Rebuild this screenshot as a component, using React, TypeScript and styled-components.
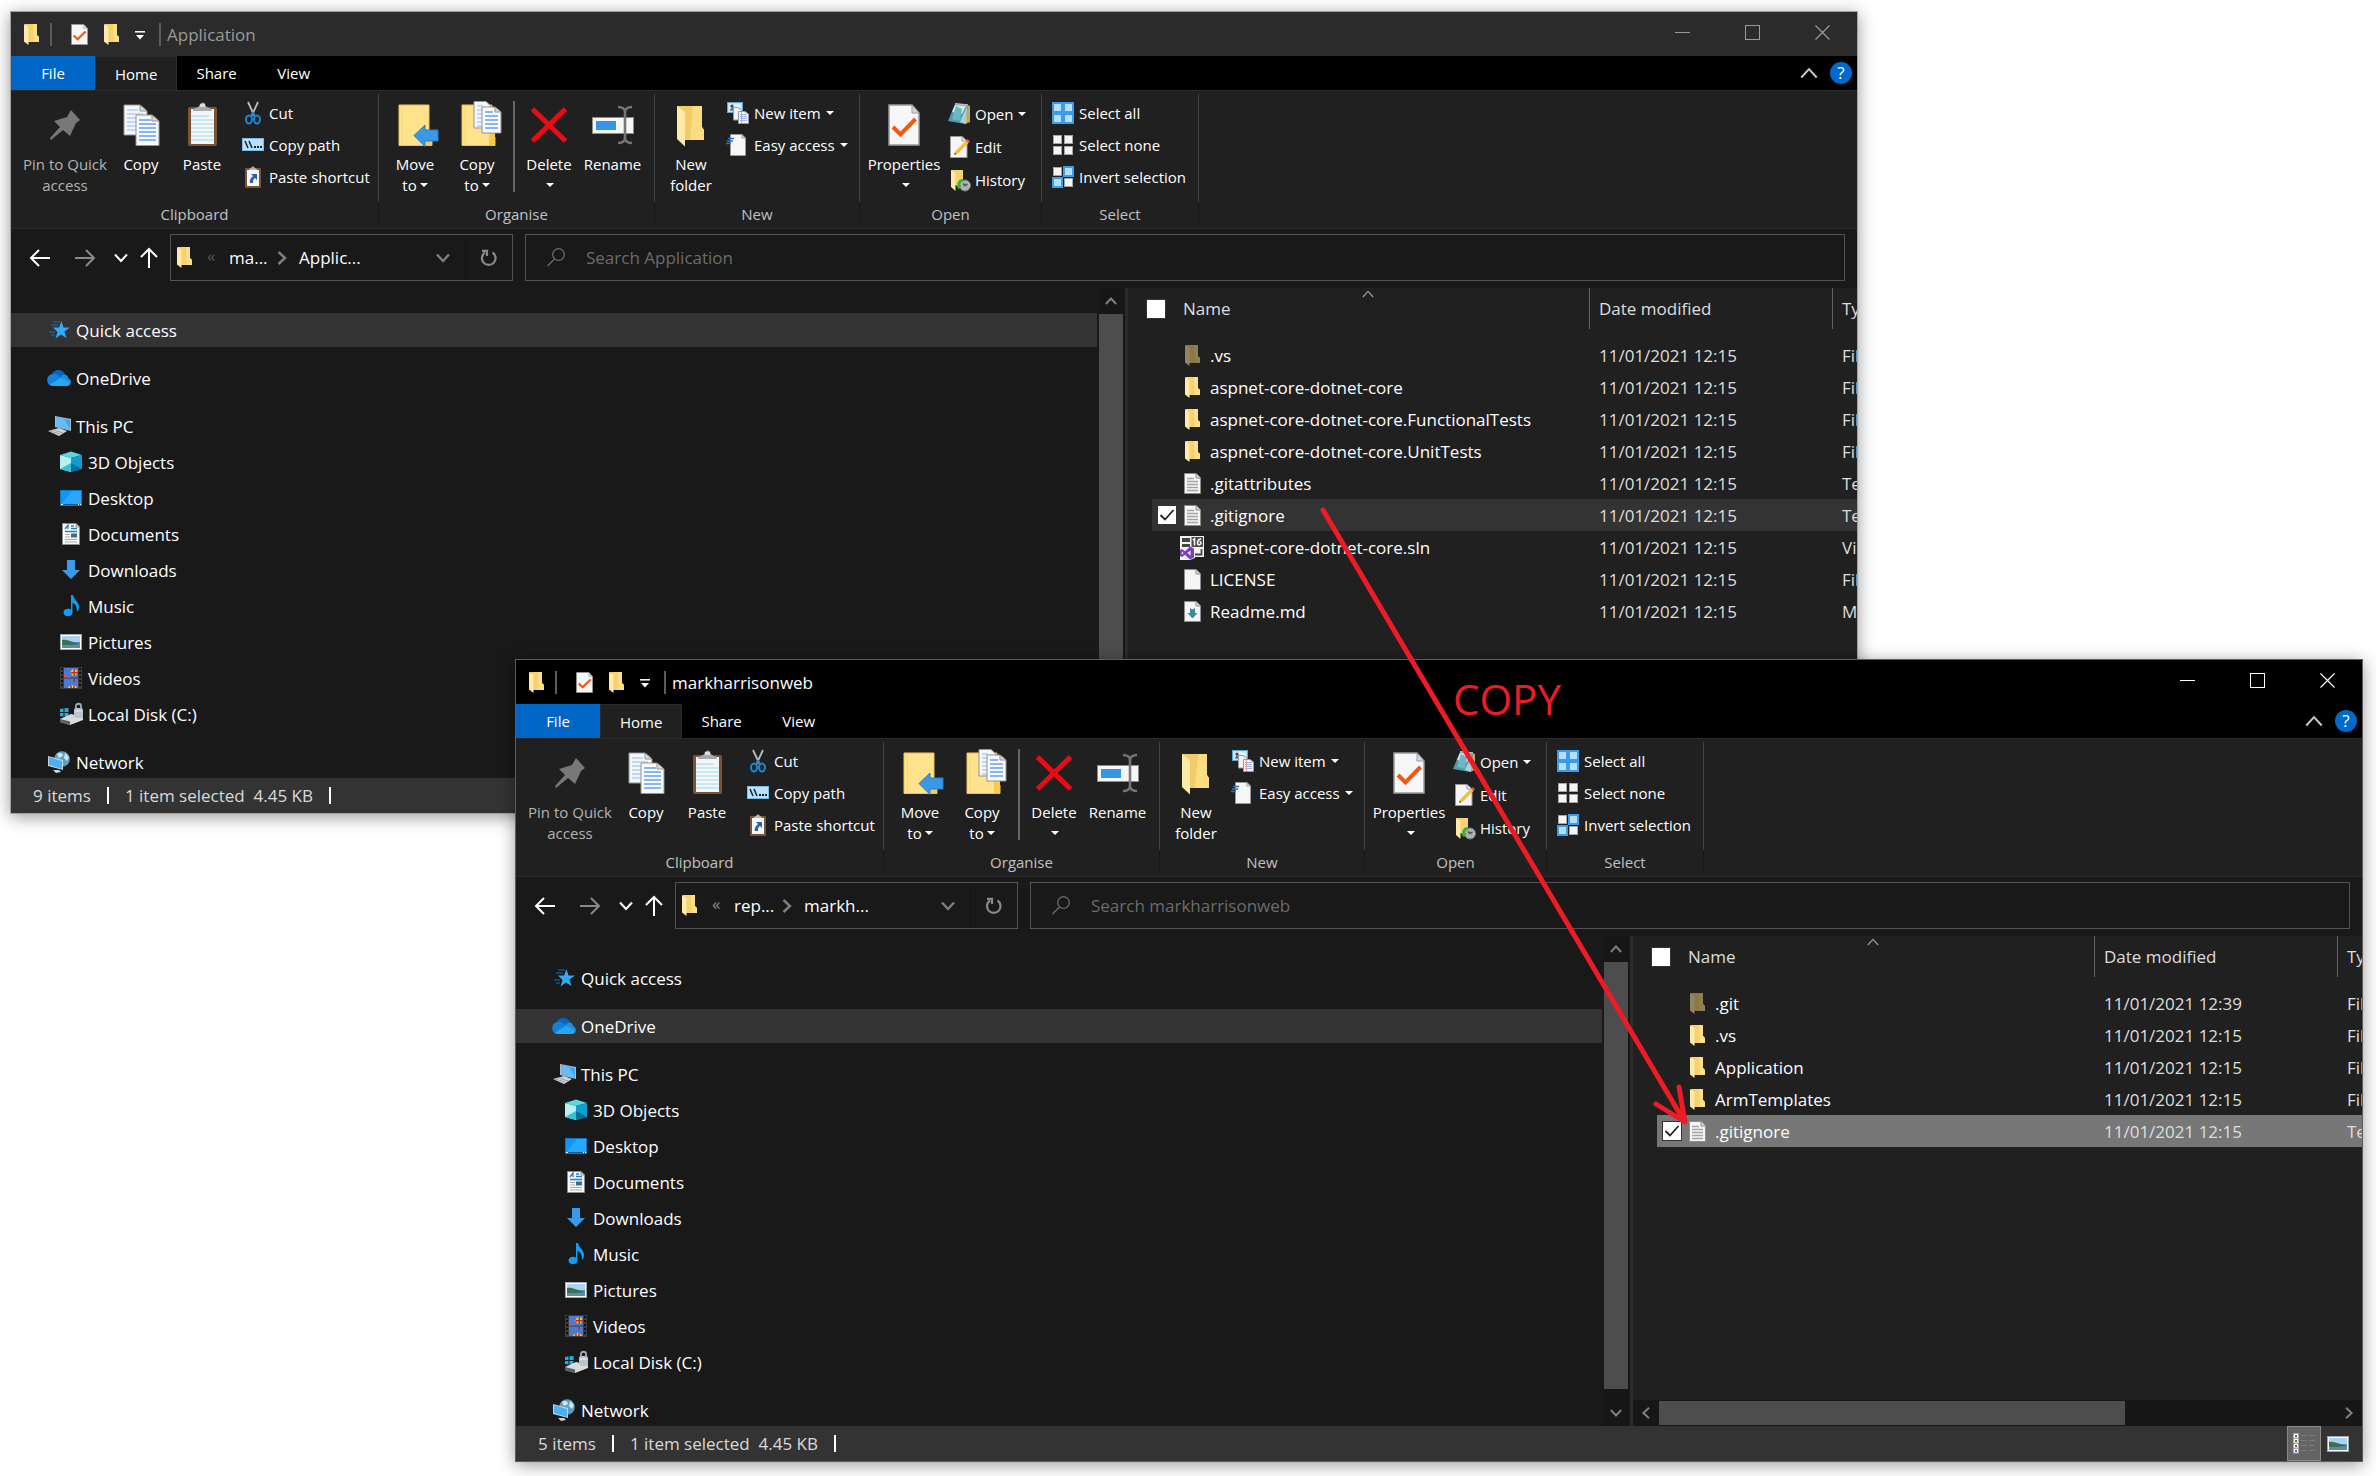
import React from 'react';
import styled, { createGlobalStyle, css } from 'styled-components';

const GlobalStyle = createGlobalStyle`
  *, *::before, *::after { box-sizing: border-box; }
  body { margin: 0; background: #fff; }
  body, button, input, table { font-family: 'Open Sans', 'Noto Sans', sans-serif; font-size: 17px; }
  button {
    margin: 0; padding: 0; border: 0; background: none; color: inherit;
    cursor: pointer; text-align: left; white-space: nowrap;
  }
  ul { margin: 0; padding: 0; list-style: none; }
  svg { display: block; flex: none; overflow: visible; }
`;

/* ---------- drawings ---------- */

const SmallFolder = ({ dim = false, w = 15 }: { dim?: boolean; w?: number }) => (
  <svg width={w} height={21} viewBox="0 0 15 21" preserveAspectRatio="none" opacity={dim ? 0.5 : 1}>
    <path d="M1 0H13V11L15 13V18H3Z" fill="#f7d272" />
    <path d="M9 0H13V11L15 13V18H10Z" fill="#fddf85" />
    <path d="M0 0L4.500 3V21L0 17.500Z" fill="#ffeaa8" />
  </svg>
);

const Sheet = ({ kind = 'blank' }: { kind?: 'blank' | 'text' | 'md' }) => (
  <svg width={17} height={21} viewBox="0 0 17 21">
    <path d="M.5.5H12L16.500 5V20.500H.5Z" fill="#f4f5f6" stroke="#8c8c8c" />
    <path d="M12 .5V5H16.500" fill="#dcdcdc" stroke="#8c8c8c" />
    {kind === 'text' && (
      <path d="M3 5.500H10M3 8.500H14M3 11.500H14M3 14.500H14M3 17.500H14" stroke="#a4a4a4" strokeWidth="1.300" />
    )}
    {kind === 'md' && <path d="M6 7L8.500 8.500L11 7V12H13.500L8.500 17.500L3.500 12H6Z" fill="#3f87a6" />}
  </svg>
);

const SolutionIcon = () => (
  <svg width={24} height={23} viewBox="0 0 24 23">
    <rect width={24} height={21} fill="#f3f3f3" />
    <path d="M2 2H10V6H2ZM2 7H10V11H2Z" fill="#454545" />
    <path d="M2 7.500H10" stroke="#f3f3f3" />
    <rect x={11.500} y={1} width={11.500} height={10} fill="#4c4c4c" />
    <path d="M12.800 4L14.500 2.800V9.500M21 2.800C18 3.500 17.500 5 17.500 7.500A1.800 1.600 0 1 0 19.500 5.500" stroke="#fff" strokeWidth="1.500" fill="none" />
    <path d="M21.500 13V18.500H15" stroke="#454545" strokeWidth="1.800" fill="none" />
    <path d="M-.5 11H10L15 13V22L10 24H0Z" fill="#f3f3f3" />
    <path d="M10 10.500L14 12.500V21.500L10 23.500L5 18.800L2 21L0 20V14L2 13L5 15.200ZM10.500 14.500L7.200 17L10.500 19.500ZM1.800 15.200V18.800L3.500 17Z" fill="#7b3fc4" fillRule="evenodd" />
  </svg>
);

const CheckSheet = ({ w = 18, h = 21 }: { w?: number; h?: number }) => (
  <svg width={w} height={h} viewBox="0 0 32 42" preserveAspectRatio="none">
    <path d="M1 1H24L31 9V41H1Z" fill="#f6f7f8" stroke="#9a9a9a" strokeWidth="1.500" />
    <path d="M24 1V9H31Z" fill="#d7d9db" stroke="#9a9a9a" />
    <path d="M5 23L12.500 30.500L27.500 15" fill="none" stroke="#f0590f" strokeWidth="4" />
  </svg>
);

const QuickMenuIcon = () => (
  <svg width={10} height={12} viewBox="0 0 10 12">
    <path d="M0 3.800H10" stroke="#fff" strokeWidth="1.500" />
    <path d="M1 7H9L5 11.500Z" fill="#fff" />
  </svg>
);

const MinimiseIcon = () => <svg width={15} height={15}><path d="M0 7.500H15" stroke="currentColor" /></svg>;
const MaximiseIcon = () => <svg width={15} height={15}><rect x=".5" y=".5" width={14} height={14} fill="none" stroke="currentColor" /></svg>;
const CloseIcon = () => <svg width={15} height={15}><path d="M.5.5L14.500 14.500M14.500.5L.5 14.500" stroke="currentColor" strokeWidth="1.200" /></svg>;

const Caret = styled.span`
  display: inline-block;
  border: 4px solid transparent;
  border-top-color: currentColor;
  border-bottom: 0;
  vertical-align: 4px;
  margin-left: 5px;
`;

type ChevronProps = { dir: 'up' | 'down' | 'left' | 'right'; size?: number; color?: string; weight?: number };
const turns = { up: 0, right: 90, down: 180, left: 270 };
const Chevron = ({ dir, size = 14, color = '#7e7e7e', weight = 2 }: ChevronProps) => (
  <svg width={size} height={size} viewBox="0 0 14 14">
    <path d="M1 10.500L7 4L13 10.500" fill="none" stroke={color} strokeWidth={weight} transform={`rotate(${turns[dir]} 7 7)`} />
  </svg>
);

const HelpBadge = styled.button`
  width: 22px;
  height: 22px;
  border-radius: 50%;
  background: #0069cc;
  color: #fff;
  font-size: 17px;
  line-height: 22px;
  text-align: center;
`;

/* Large ribbon drawings share a 44 x 46 field. */
const Big = ({ children }: { children: React.ReactNode }) => (
  <svg width={44} height={46} viewBox="0 0 44 46">{children}</svg>
);

const pageLines = (x: number, y: number, w: number, n: number, color: string, step = 4) =>
  Array.from({ length: n }, (_, i) => (
    <path key={i} d={`M${x} ${y + i * step}H${x + (i === 0 ? w - 5 : w)}`} stroke={color} strokeWidth="1.300" />
  ));

const PinIcon = () => (
  <Big>
    <path d="M28 9L37 19L33 22L27 35L20 29L8 39L7 37L17 26L11 20L24 16Z" fill="#787878" />
  </Big>
);
const CopyIcon = () => (
  <Big>
    <path d="M5 4H21L28 10V34H5Z" fill="#f4f6fa" stroke="#939393" />
    <path d="M21 4V10H28Z" fill="#ddd" stroke="#939393" />
    {pageLines(8, 9, 16, 6, '#a9c8f5')}
    <path d="M17 14H33L40 20V44.500H17Z" fill="#f8f9fb" stroke="#939393" />
    <path d="M33 14V20H40Z" fill="#ddd" stroke="#939393" />
    {pageLines(20, 19, 17, 6, '#4a93ee')}
  </Big>
);
const PasteIcon = () => (
  <Big>
    <rect x={8} y={6} width={29} height={39} rx={2} fill="#7b5336" />
    <path d="M11 8H34V43H11Z" fill="#f4f7f9" />
    {pageLines(11, 15, 23, 7, '#b5dcec')}
    <path d="M13 10C13 6 19 8 20 3C22 1 24 1 25 3C26 8 32 6 32 10Z" fill="#a9a9a9" />
    <rect x={20} y={3} width={5} height={3} fill="#ddd" />
  </Big>
);
const folderBody = (x: number) => (
  <>
    <path d={`M${x} 4H${x + 30}V36H${x + 33}V44.500H${x}Z`} fill="#ffe28c" stroke="#f0c44a" />
    <path d={`M${x + 3} 4V44`} stroke="#f7d77a" />
    <path d={`M${x + 27} 44V31C${x + 27} 28 ${x + 33} 28 ${x + 33} 32V44Z`} fill="#f6c94f" />
  </>
);
const MoveIcon = () => (
  <Big>
    {folderBody(6)}
    <path d="M21 34.500L32 24V29H45V40H32V45.500Z" fill="#3b98e6" stroke="#2a7cc4" />
  </Big>
);
const CopyToIcon = () => (
  <Big>
    {folderBody(7)}
    <path d="M19 .5H31L36 5V27H19Z" fill="#f4f6fa" stroke="#939393" />
    {pageLines(22, 5, 11, 6, '#a9c8f5')}
    <path d="M27 6H40L46 11V32H27Z" fill="#f8f9fb" stroke="#939393" />
    <path d="M40 6V11H46Z" fill="#ddd" stroke="#939393" />
    {pageLines(30, 11, 13, 5, '#4a93ee')}
  </Big>
);
const DeleteIcon = () => (
  <Big>
    <path d="M5.500 8L38.500 40M38.500 8L5.500 40" stroke="#ee0a14" strokeWidth="5" />
  </Big>
);
const RenameIcon = () => (
  <Big>
    <rect x="1.500" y="16.500" width={41} height={16} fill="#f5f6f7" stroke="#8c8c8c" />
    <rect x={5} y={20} width={20} height={9} fill="#3596e8" />
    <path d="M27 6C31 6 34 8 34 11V37C34 40 31 42 27 42M41 6C37 6 34 8 34 11V37C34 40 37 42 41 42" fill="none" stroke="#757575" strokeWidth="2.600" />
  </Big>
);
const NewFolderIcon = () => (
  <Big>
    <path d="M8 5H33V26L35 29V39H15Z" fill="#f1cc69" />
    <path d="M24 5H33V26L35 29V39H21Z" fill="#fbdc82" />
    <path d="M8 5L16 11V45.500L8 38Z" fill="#ffeaa8" />
  </Big>
);
const PropertiesIcon = () => (
  <Big>
    <svg x={6} y={3}><CheckSheet w={32} h={42} /></svg>
  </Big>
);

/* Small ribbon drawings share a 22 x 22 field. */
const Small = ({ children }: { children: React.ReactNode }) => (
  <svg width={22} height={22} viewBox="0 0 22 22">{children}</svg>
);
const CutIcon = () => (
  <Small>
    <path d="M6 0L12.500 14M16 0L9.500 14" stroke="#b9bdc2" strokeWidth="1.800" />
    <ellipse cx={7} cy={17.500} rx={3} ry={4} fill="none" stroke="#1c86cf" strokeWidth="2" />
    <ellipse cx={15} cy={17.500} rx={3} ry={4} fill="none" stroke="#1c86cf" strokeWidth="2" />
    <path d="M9 14L11 11L13 14" fill="none" stroke="#1c86cf" strokeWidth="2" />
  </Small>
);
const CopyPathIcon = () => (
  <Small>
    <rect x=".5" y="4.500" width={21} height={12} fill="#b9e1fb" stroke="#7cbbe4" />
    <path d="M3 7L6 14M7 7L10 14" stroke="#123" strokeWidth="1.500" />
    <path d="M12 13H14M15 13H17M18 13H20" stroke="#123" strokeWidth="2" />
  </Small>
);
const ShortcutIcon = () => (
  <Small>
    <rect x={3} y={2} width={16} height={20} rx={1} fill="#7b5336" />
    <rect x={5} y={4} width={12} height={16} fill="#f6f7f9" />
    <path d="M7 4C7 2 10 2 11 0C12 2 15 2 15 4Z" fill="#b5b5b5" />
    <path d="M9 8H15V14L13 12C11 13 11 15 11 17L8 17C7 14 9 12 11 10Z" fill="#2f5fae" />
  </Small>
);
const NewItemIcon = () => (
  <Small>
    <rect x=".5" y=".5" width={15} height={10} fill="#bfe2f5" stroke="#5fa6cf" />
    <rect x={2.500} y={2.500} width={11} height={6} fill="#e8f4fa" />
    <path d="M3 8.500C3 5 7 5 7 8.500Z" fill="#37628a" />
    <circle cx={5} cy={4.200} r={1.600} fill="#5a4534" />
    <path d="M6.500 5.500H11L14.500 8V18H6.500Z" fill="#f2f2f2" stroke="#999" />
    <path d="M11.500 9.500H18L21.500 12V21.500H11.500Z" fill="#f6f6f6" stroke="#999" />
    <path d="M13 12.500H20M13 14.500H20M13 16.500H20M13 18.500H20" stroke="#9db7e0" />
    <path d="M14.500 10V21" stroke="#e69a9a" />
  </Small>
);
const EasyAccessIcon = () => (
  <Small>
    <path d="M3.500.5H15L18.500 4V21.500H3.500Z" fill="#f4f6f8" stroke="#999" />
    <path d="M15 .5V4H18.500" fill="none" stroke="#999" />
    <path d="M1 4.500H7M0 7H6M-1 9.500H4" stroke="#2a74c0" strokeWidth="1.400" />
  </Small>
);
const OpenIcon = () => (
  <Small>
    <path d="M19 2L22 3V19L17 21Z" fill="#c9a65a" />
    <path d="M7 1L20 2L17 21L0 18Z" fill="#4f9aac" />
    <path d="M7 2L18 3L14 11L4 9Z" fill="#cfe9ee" />
    <path d="M8 3L4 16L12 18L14 6Z" fill="#6fb5c3" />
    <path d="M19 3L18 21L12 19Z" fill="#a9d3dc" />
    <path d="M7 .8L20 2" stroke="#b9c3c6" strokeWidth="1.400" />
  </Small>
);
const EditIcon = () => (
  <Small>
    <path d="M2.500.5H14L19 5V21.500H2.500Z" fill="#f6f6f6" stroke="#999" />
    <path d="M14 .5V5H19" fill="none" stroke="#999" />
    <path d="M6 19L7.500 15L18 4.500L20.500 7L10 17.500Z" fill="#f4bf3c" />
    <path d="M18 4.500L19.500 3L22 5.500L20.500 7Z" fill="#e0566a" />
    <path d="M6 19L7 16.500L8.500 18Z" fill="#4a4a4a" />
  </Small>
);
const HistoryIcon = () => (
  <Small>
    <path d="M3 1H15V16H5Z" fill="#f7d272" />
    <path d="M3 1L7.500 4V22L3 18Z" fill="#ffeaa8" />
    <circle cx={17} cy={16.500} r="5.500" fill="#a5aaad" stroke="#74797c" />
    <circle cx={17} cy={16.500} r="3.800" fill="none" stroke="#d9dcde" strokeDasharray="1 1.500" />
    <path d="M15 14.500L17 16.500L19.500 15" fill="none" stroke="#444" strokeWidth="1.200" />
    <path d="M15 10C11 10 9 13 9.500 16L7.500 16L11 20.500L13.500 16H11.500C11.500 14 13 12.500 15 12.500Z" fill="#2fb52f" />
  </Small>
);
const Tiles = ({ on }: { on: boolean[] }) => (
  <Small>
    {on.map((active, i) => {
      const x = (i % 2) * 11;
      const y = i < 2 ? 0 : 11;
      return active ? (
        <rect key={i} x={x + 1} y={y + 1} width={9} height={9} fill="#b5e0fc" stroke="#3c9bea" strokeWidth="2" />
      ) : (
        <rect key={i} x={x + 1.5} y={y + 1.5} width={8} height={8} fill="#f5f5f5" stroke="#a5a5a5" />
      );
    })}
  </Small>
);

/* Navigation drawings share a 24 x 24 field. */
const Nav24 = ({ children }: { children: React.ReactNode }) => (
  <svg width={24} height={24} viewBox="0 0 24 24">{children}</svg>
);
const navIcons: Record<string, React.ReactNode> = {
  star: (
    <Nav24>
      <path d="M14.500 3L16.500 9.500H23L17.500 13.500L19.500 20L14 16.500L8.500 20.500L10.500 14L6 9.500H12Z" fill="#35a8f5" />
      <path d="M6 4H13M4 7H11M2 14H8M4 17H8" stroke="#1f6ea8" />
    </Nav24>
  ),
  cloud: (
    <Nav24>
      <path d="M5 9C6 3 15 2 18 8L12 14L3 12Z" fill="#0a63bd" />
      <path d="M5 8C8 7 11 9 14 11L6 20C-1 20-2 10 5 8Z" fill="#1480dc" />
      <path d="M14 11C16 7 21 8 21 12C25 13 25 20 20 20H14Z" fill="#1b90e6" />
      <path d="M3 18.500L14 11.500L23 17C22 19 21 20 19.500 20H6C5 20 4 19.500 3 18.500Z" fill="#2aa6ee" />
    </Nav24>
  ),
  pc: (
    <Nav24>
      <path d="M8 2L24 5V17L8 13Z" fill="#b3bac0" />
      <path d="M9 3L23 6V16L9 12Z" fill="#3da6f2" />
      <path d="M9 3L17 5L23 15L23 16L9 12Z" fill="#63bdf8" />
      <path d="M1 17L12 14L20 17L12 22Z" fill="#cfd4d9" />
      <path d="M3 17L13 20M7 16L16 19" stroke="#8a9299" strokeWidth=".8" />
    </Nav24>
  ),
  cube: (
    <Nav24>
      <path d="M1 5L12 1.500L23 5L12 8Z" fill="#5cd6e0" />
      <path d="M1 5L12 8V22L1 19Z" fill="#b5f0f3" />
      <path d="M23 5L12 8V22L23 19Z" fill="#0e9ed0" />
      <path d="M1 19L12 13V22Z" fill="#35c2d4" />
      <path d="M23 19L12 13V22Z" fill="#076f9c" />
    </Nav24>
  ),
  desktop: (
    <Nav24>
      <rect x={1.500} y={4.500} width={21} height={15} fill="#0f97f5" stroke="#0a78c6" />
      <path d="M2 19L13 5H22V19Z" fill="#2aa8ff" />
      <path d="M3 18.500H21" stroke="#0860a0" />
      <path d="M2 18.500H4M19 18.500H20M21 18.500H22" stroke="#fff" />
    </Nav24>
  ),
  document: (
    <Nav24>
      <path d="M3.500 1.500H17L20.500 5V22.500H3.500Z" fill="#fafafa" stroke="#8c8c8c" />
      <path d="M17 1.500V5H20.500" fill="none" stroke="#8c8c8c" />
      <path d="M6 7L9 3V7M12 4H15M12 6.500H18M6 9.500H18" fill="none" stroke="#1d80c9" strokeWidth="1.300" />
      <path d="M6 12.500H11M6 15H11M6 17.500H18M6 20H18" stroke="#aaa" />
      <rect x={12} y={11.500} width={6} height={4} fill="#3a6c8c" />
    </Nav24>
  ),
  download: (
    <Nav24>
      <path d="M8 2H16V12H21L12 21L3 12H8Z" fill="#3b98ea" />
    </Nav24>
  ),
  music: (
    <Nav24>
      <ellipse cx={9} cy={18.500} rx={4.500} ry={3.800} fill="#119cf5" />
      <path d="M12 1H14C15 6 20 8 20 13C20 15 19 17 18 18C18 13 17 10 13.500 9V18H12Z" fill="#119cf5" />
    </Nav24>
  ),
  picture: (
    <Nav24>
      <rect x={1.500} y={4.500} width={21} height={15} fill="#fff" stroke="#a5a5a5" />
      <rect x={3} y={6} width={18} height={6} fill="#a9d3f5" />
      <rect x={3} y={12} width={18} height={6} fill="#5d8cab" />
      <path d="M3 10C8 9 12 12 21 14C16 15 8 15 3 15Z" fill="#3f6f52" />
    </Nav24>
  ),
  video: (
    <Nav24>
      <rect x={1} y={1} width={22} height={22} fill="#3c3c3c" />
      <rect x={5} y={2} width={14} height={9.500} fill="#4a7bd0" />
      <rect x={5} y={12.500} width={14} height={9.500} fill="#4a7bd0" />
      <path d="M5 8L11 11.500H5Z" fill="#d44a6c" />
      <path d="M15 3C18 3 19 6 18 8L16 10H14L12 8C11 5 13 3 15 3Z" fill="#f4c51e" />
      <path d="M14.500 3H16V10H14.500ZM12 6H19V7.500H12Z" fill="#cc2a1e" />
      <path d="M9 22C10 18 17 18 18 22Z" fill="#f4c51e" />
      <path d="M12 22V19.500M15 22V19.500M15 13V16" stroke="#cc2a1e" strokeWidth="1.600" />
      <path d="M3 2V22M21 2V22" stroke="#111" strokeWidth="2" strokeDasharray="2 2" />
    </Nav24>
  ),
  disk: (
    <Nav24>
      <path d="M1 7L4.500 6.500V10H1ZM5.500 6.300L9.500 6V10H5.500ZM1 11H4.500V14.500L1 14ZM5.500 11H9.500V15L5.500 14.500Z" fill="#14b4e8" />
      <path d="M1 17L12 12L24 15V18L11 23L1 20Z" fill="#d8dadc" />
      <path d="M1 17L11 19.500V23L1 20Z" fill="#5a5f62" />
      <rect x={15} y={6} width={9} height={10} rx={2} fill="#bcc5cb" />
      <path d="M17 7V4C17 1 22 1 22 4V7" fill="none" stroke="#a5adb2" strokeWidth="1.800" />
      <path d="M16 9H23" stroke="#eef" />
    </Nav24>
  ),
  network: (
    <Nav24>
      <circle cx={15} cy={9} r={7.800} fill="#5e9fbe" />
      <path d="M10 4C13 2 16 3 16 6L12 8ZM18 3L22 7L20 11L17 8Z" fill="#cfe7f0" />
      <path d="M1 6L16 10V20L1 16Z" fill="#c9d3da" />
      <path d="M2 7L15 11V19L2 15Z" fill="#4db0f5" />
      <path d="M6 20L12 20L14 22L9 23Z" fill="#cfd4d9" />
    </Nav24>
  ),
};

/* ---------- window frame ---------- */

const Desktop = styled.main`
  position: relative;
  min-height: 100vh;
  overflow: hidden;
  background: #fff;
`;

const Frame = styled.section<{ $front?: boolean }>`
  position: absolute;
  top: ${(p) => (p.$front ? 659 : 11)}px;
  left: ${(p) => (p.$front ? 515 : 10)}px;
  width: calc(100% - 528px);
  min-width: 1300px;
  height: calc(100vh - 673px);
  min-height: 640px;
  display: flex;
  flex-direction: column;
  border: 1px solid ${(p) => (p.$front ? '#5c5c5c' : '#a2a2a2')};
  background: #191919;
  color: #fff;
  box-shadow: 0 3px 16px rgba(0, 0, 0, 0.4);
`;

const TitleBar = styled.header<{ $front?: boolean }>`
  flex: none;
  display: flex;
  align-items: center;
  height: 44px;
  padding-left: 13px;
  background: ${(p) => (p.$front ? '#000' : '#2b2b2b')};
  color: ${(p) => (p.$front ? '#fff' : '#9a9a9a')};
`;
const TitleRule = styled.span`
  width: 2px;
  height: 23px;
  background: #5c5c5c;
`;
const QuickTools = styled.div`
  display: flex;
  align-items: center;
  gap: 16px;
  padding: 0 14px 0 19px;
`;
const TitleLead = styled.div`
  display: flex;
  align-items: center;
  gap: 11px;
`;
const Title = styled.h1`
  margin: 0;
  padding-left: 6px;
  flex: 1;
  font-size: 17px;
  font-weight: 400;
`;
const CaptionButton = styled.button`
  width: 70px;
  height: 44px;
  padding-bottom: 3px;
  display: grid;
  place-items: center;
`;

const TabBar = styled.div`
  flex: none;
  display: flex;
  align-items: center;
  height: 34px;
  background: #000;
`;
const Tab = styled.button<{ $kind?: 'file' | 'active' }>`
  height: 34px;
  min-width: ${(p) => (p.$kind === 'file' ? 84 : 76)}px;
  padding: 0 19px;
  font-size: 15px;
  text-align: center;
  ${(p) => p.$kind === 'file' && css`background: #0066c5;`}
  ${(p) => p.$kind === 'active' && css`
    background: #202020;
    border: 1px solid #2b2b2b;
    border-bottom: 0;
  `}
`;
const TabTools = styled.div`
  display: flex;
  align-items: center;
  gap: 12px;
  margin-left: auto;
  padding-right: 5px;
`;

/* ---------- ribbon ---------- */

const RibbonBar = styled.div`
  flex: none;
  display: flex;
  height: 139px;
  padding: 3px 0;
  background: #202020;
  border: solid #2b2b2b;
  border-width: 1px 0;
`;
const Group = styled.section<{ $w: number }>`
  flex: none;
  width: ${(p) => p.$w}px;
  display: flex;
  flex-direction: column;
  font-size: 15px;
`;
const GroupBody = styled.div<{ $pad: number }>`
  display: flex;
  height: 108px;
  padding-left: ${(p) => p.$pad}px;
  border-right: 1px solid #424242;
`;
const GroupName = styled.h2`
  margin: 0;
  height: 23px;
  border-right: 1px solid #181818;
  color: #c0c0c0;
  font-size: 15px;
  font-weight: 400;
  line-height: 25px;
  text-align: center;
`;
const BigButton = styled.button<{ $w: number; $muted?: boolean }>`
  width: ${(p) => p.$w}px;
  padding-top: 7px;
  display: flex;
  flex-direction: column;
  align-items: center;
  font-size: 15px;
  line-height: 21px;
  color: ${(p) => (p.$muted ? '#b4b4b4' : '#fff')};
`;
const BigLabel = styled.span`
  margin-top: 7px;
  text-align: center;
  ${Caret} { margin-left: 3px; }
`;
const SmallList = styled.div`
  padding: 3px 0 0 4px;
  display: flex;
  flex-direction: column;
`;
const SmallButton = styled.button<{ $h: number }>`
  height: ${(p) => p.$h}px;
  display: flex;
  align-items: center;
  gap: 5px;
  font-size: 15px;
`;
const RibbonRule = styled.span`
  width: 2px;
  height: 91px;
  margin: 7px 3px 0 5px;
  background: #666;
`;

type SmallItem = { icon: React.ReactNode; label: string; menu?: boolean };
const SmallItems = ({ items, h = 32 }: { items: SmallItem[]; h?: number }) => (
  <SmallList>
    {items.map((it) => (
      <SmallButton key={it.label} type="button" $h={h}>
        {it.icon}
        <span>{it.label}{it.menu && <Caret />}</span>
      </SmallButton>
    ))}
  </SmallList>
);

type BigItemProps = { icon: React.ReactNode; lines: string[]; w: number; menu?: boolean; muted?: boolean };
const BigItem = ({ icon, lines, w, menu, muted }: BigItemProps) => (
  <BigButton type="button" $w={w} $muted={muted}>
    {icon}
    <BigLabel>
      {lines.map((line, i) => (
        <React.Fragment key={i}>
          {i > 0 && <br />}
          {line}
          {menu && i === lines.length - 1 && <Caret />}
        </React.Fragment>
      ))}
    </BigLabel>
  </BigButton>
);

const Ribbon = () => (
  <RibbonBar>
    <Group $w={368}>
      <GroupBody $pad={3}>
        <BigItem icon={<PinIcon />} lines={['Pin to Quick', 'access']} w={102} muted />
        <BigItem icon={<CopyIcon />} lines={['Copy']} w={50} />
        <BigItem icon={<PasteIcon />} lines={['Paste']} w={72} />
        <SmallItems
          items={[
            { icon: <CutIcon />, label: 'Cut' },
            { icon: <CopyPathIcon />, label: 'Copy path' },
            { icon: <ShortcutIcon />, label: 'Paste shortcut' },
          ]}
        />
      </GroupBody>
      <GroupName>Clipboard</GroupName>
    </Group>
    <Group $w={276}>
      <GroupBody $pad={5}>
        <BigItem icon={<MoveIcon />} lines={['Move', 'to']} w={62} menu />
        <BigItem icon={<CopyToIcon />} lines={['Copy', 'to']} w={62} menu />
        <RibbonRule />
        <BigItem icon={<DeleteIcon />} lines={['Delete', '']} w={62} menu />
        <BigItem icon={<RenameIcon />} lines={['Rename']} w={65} />
      </GroupBody>
      <GroupName>Organise</GroupName>
    </Group>
    <Group $w={205}>
      <GroupBody $pad={4}>
        <BigItem icon={<NewFolderIcon />} lines={['New', 'folder']} w={64} />
        <SmallItems
          items={[
            { icon: <NewItemIcon />, label: 'New item', menu: true },
            { icon: <EasyAccessIcon />, label: 'Easy access', menu: true },
          ]}
        />
      </GroupBody>
      <GroupName>New</GroupName>
    </Group>
    <Group $w={182}>
      <GroupBody $pad={4}>
        <BigItem icon={<PropertiesIcon />} lines={['Properties', '']} w={80} menu />
        <SmallItems
          h={33}
          items={[
            { icon: <OpenIcon />, label: 'Open', menu: true },
            { icon: <EditIcon />, label: 'Edit' },
            { icon: <HistoryIcon />, label: 'History' },
          ]}
        />
      </GroupBody>
      <GroupName>Open</GroupName>
    </Group>
    <Group $w={157}>
      <GroupBody $pad={6}>
        <SmallItems
          items={[
            { icon: <Tiles on={[true, true, true, true]} />, label: 'Select all' },
            { icon: <Tiles on={[false, false, false, false]} />, label: 'Select none' },
            { icon: <Tiles on={[false, true, true, false]} />, label: 'Invert selection' },
          ]}
        />
      </GroupBody>
      <GroupName>Select</GroupName>
    </Group>
  </RibbonBar>
);

/* ---------- address row ---------- */

const AddressRow = styled.div`
  flex: none;
  display: flex;
  align-items: center;
  height: 59px;
  padding: 0 12px 2px 13px;
`;
const ArrowButton = styled.button<{ $w: number }>`
  width: ${(p) => p.$w}px;
  height: 32px;
  display: grid;
  place-items: center;
`;
const AddressBox = styled.div`
  width: 343px;
  height: 47px;
  margin-right: 12px;
  padding-left: 6px;
  display: flex;
  align-items: center;
  border: 1px solid #535353;
`;
const More = styled.button<{ $front?: boolean }>`
  width: 37px;
  padding: 0 0 4px 15px;
  color: ${(p) => (p.$front ? '#8e8e8e' : '#555')};
`;
const Crumb = styled.button<{ $w: number }>`
  width: ${(p) => p.$w}px;
`;
const Between = styled.span`
  width: 24px;
`;
const AddressEnd = styled.button<{ $w: number; $rule?: boolean }>`
  width: ${(p) => p.$w}px;
  height: 45px;
  display: grid;
  place-items: center;
  ${(p) => p.$rule && css`border-left: 1px solid #141414;`}
`;
const Spring = styled.span`
  flex: 1;
`;
const SearchBox = styled.label`
  flex: 1;
  height: 47px;
  padding-left: 21px;
  display: flex;
  align-items: center;
  gap: 21px;
  border: 1px solid #535353;
`;
const SearchInput = styled.input`
  flex: 1;
  min-width: 0;
  padding: 0;
  border: 0;
  outline: 0;
  background: none;
  color: #fff;
  &::placeholder { color: #6c6c6c; opacity: 1; }
`;

const arrow = (color: string, turn: number) => (
  <svg width={20} height={20} viewBox="0 0 20 20">
    <path d="M20 10H1M9 2L1 10L9 18" fill="none" stroke={color} strokeWidth="2" transform={`rotate(${turn} 10 10)`} />
  </svg>
);

/* ---------- body ---------- */

const Body = styled.div`
  flex: 1;
  min-height: 0;
  display: grid;
  grid-template-columns: minmax(0, 1fr) 26px 732px;
`;
const NavPane = styled.nav`
  padding: 24px 2px 0 0;
  overflow: hidden;
`;
const NavItem = styled.li`
  padding: 1px 0;
`;
const NavRow = styled.button<{ $child?: boolean; $active?: boolean }>`
  width: 100%;
  height: 34px;
  padding-left: ${(p) => (p.$child ? 48 : 36)}px;
  display: flex;
  align-items: center;
  gap: 5px;
  background: ${(p) => (p.$active ? '#333' : 'transparent')};
`;
const NavGroup = styled.ul`
  margin-bottom: 12px;
`;
const VScroll = styled.div`
  display: flex;
  flex-direction: column;
  align-items: center;
  padding-right: 2px;
  background: #171717;
`;
const VTrack = styled.div`
  flex: 1;
  width: 24px;
  padding-bottom: 11px;
  display: flex;
`;
const VThumb = styled.div`
  flex: 1;
  background: #4d4d4d;
`;
const ScrollEnd = styled.button`
  flex: none;
  width: 26px;
  min-height: 24px;
  display: grid;
  place-items: center;
  ${VScroll} > & { width: 24px; height: 26px; }
`;
const ListPane = styled.div`
  display: flex;
  flex-direction: column;
  justify-content: space-between;
  min-width: 0;
  overflow: hidden;
  background: #202020;
  border-left: 3px solid #2b2b2b;
`;
const FileTable = styled.table`
  width: 100%;
  table-layout: fixed;
  border-collapse: collapse;
  th, td {
    padding: 0 0 0 10px;
    overflow: hidden;
    font-weight: 400;
    text-align: left;
    white-space: nowrap;
  }
  th { height: 41px; color: #dedede; position: relative; }
  td { height: 32px; color: #dedede; }
  tbody::before { content: ''; display: block; height: 10px; }
  th:nth-child(n + 3)::before {
    content: '';
    position: absolute;
    left: 0;
    top: 0;
    width: 1px;
    height: 41px;
    background: #636363;
  }
  th:nth-child(1) { padding-left: 19px; }
  th:nth-child(2) { padding-left: 3px; }
  td:nth-child(1) { padding-left: 24px; background-clip: content-box; }
  td:nth-child(2) { padding-left: 0; color: #fff; }
`;
const CheckCol = styled.col`width: 52px;`;
const NameCol = styled.col`width: 409px;`;
const DateCol = styled.col`width: 243px;`;
const FileRow = styled.tr<{ $fill?: string }>`
  td { background-color: ${(p) => p.$fill ?? 'transparent'}; }
`;
const SortMark = styled.span`
  position: absolute;
  top: 0;
  left: 182px;
`;
const NameCell = styled.div`
  display: flex;
  align-items: center;
  gap: 6px;
`;
const IconSlot = styled.span`
  width: 24px;
  height: 24px;
  display: grid;
  place-items: center;
`;
const CheckLabel = styled.label<{ $inset?: number }>`
  display: grid;
  width: 18px;
  height: 18px;
  margin-left: ${(p) => p.$inset ?? 0}px;
  > * { grid-area: 1 / 1; }
`;
const CheckInput = styled.input`
  appearance: none;
  margin: 0;
  width: 18px;
  height: 18px;
  background: #fff;
  box-shadow: 0 0 0 1px #333;
  & + svg { visibility: hidden; }
  &:checked + svg { visibility: visible; }
`;

const Tick = ({ label, checked, inset }: { label: string; checked?: boolean; inset?: number }) => (
  <CheckLabel $inset={inset} aria-label={label}>
    <CheckInput type="checkbox" defaultChecked={checked} aria-label={label} />
    <svg width={18} height={18}><path d="M2.500 9L7 13.500L15.500 4" fill="none" stroke="#222" strokeWidth="1.800" /></svg>
  </CheckLabel>
);

const HScroll = styled.div`
  flex: none;
  display: flex;
  height: 26px;
  padding: 1px 0;
  background: #171717;
`;
const HThumb = styled.div`
  flex: 0 1 466px;
  background: #4d4d4d;
`;

/* ---------- status bar ---------- */

const StatusBar = styled.footer`
  flex: none;
  display: flex;
  align-items: center;
  height: 35px;
  padding-left: 22px;
  background: #333;
  color: #dadada;
`;
const StatusRule = styled.span`
  width: 2px;
  height: 17px;
  margin: 0 16px;
  background: #fff;
`;
const StatusText = styled.span`
  white-space: pre;
`;
const ViewButton = styled.button<{ $on?: boolean }>`
  width: 34px;
  height: 35px;
  display: grid;
  place-items: center;
  ${(p) => p.$on && css`
    background: #646464;
    border: 1px solid #8a8a8a;
  `}
`;
const ViewButtons = styled.div`
  display: flex;
  margin-left: auto;
  padding-right: 7px;
`;

/* ---------- content ---------- */

type FileKind = 'folder' | 'hidden' | 'text' | 'blank' | 'md' | 'sln';
type FileItem = { name: string; kind: FileKind; date: string; type: string; selected?: boolean };

const fileIcon = (kind: FileKind) => {
  if (kind === 'folder' || kind === 'hidden') return <SmallFolder dim={kind === 'hidden'} />;
  if (kind === 'sln') return <SolutionIcon />;
  return <Sheet kind={kind} />;
};

const at = '11/01/2021 12:15';

const appFiles: FileItem[] = [
  { name: '.vs', kind: 'hidden', date: at, type: 'File folder' },
  { name: 'aspnet-core-dotnet-core', kind: 'folder', date: at, type: 'File folder' },
  { name: 'aspnet-core-dotnet-core.FunctionalTests', kind: 'folder', date: at, type: 'File folder' },
  { name: 'aspnet-core-dotnet-core.UnitTests', kind: 'folder', date: at, type: 'File folder' },
  { name: '.gitattributes', kind: 'text', date: at, type: 'Text Document' },
  { name: '.gitignore', kind: 'text', date: at, type: 'Text Document', selected: true },
  { name: 'aspnet-core-dotnet-core.sln', kind: 'sln', date: at, type: 'Visual Studio' },
  { name: 'LICENSE', kind: 'blank', date: at, type: 'File' },
  { name: 'Readme.md', kind: 'md', date: at, type: 'Markdown' },
];

const repoFiles: FileItem[] = [
  { name: '.git', kind: 'hidden', date: '11/01/2021 12:39', type: 'File folder' },
  { name: '.vs', kind: 'folder', date: at, type: 'File folder' },
  { name: 'Application', kind: 'folder', date: at, type: 'File folder' },
  { name: 'ArmTemplates', kind: 'folder', date: at, type: 'File folder' },
  { name: '.gitignore', kind: 'text', date: at, type: 'Text Document', selected: true },
];

const navGroups = [
  [{ icon: 'star', label: 'Quick access' }],
  [{ icon: 'cloud', label: 'OneDrive' }],
  [
    { icon: 'pc', label: 'This PC' },
    { icon: 'cube', label: '3D Objects', child: true },
    { icon: 'desktop', label: 'Desktop', child: true },
    { icon: 'document', label: 'Documents', child: true },
    { icon: 'download', label: 'Downloads', child: true },
    { icon: 'music', label: 'Music', child: true },
    { icon: 'picture', label: 'Pictures', child: true },
    { icon: 'video', label: 'Videos', child: true },
    { icon: 'disk', label: 'Local Disk (C:)', child: true },
  ],
  [{ icon: 'network', label: 'Network' }],
] as { icon: string; label: string; child?: boolean }[][];

type ExplorerProps = {
  title: string;
  crumbs: [string, string];
  files: FileItem[];
  active: string;
  front?: boolean;
};

const Explorer = ({ title, crumbs, files, active, front }: ExplorerProps) => (
  <Frame $front={front} aria-label={title}>
    <TitleBar $front={front}>
      <TitleLead>
        <SmallFolder />
        <TitleRule />
      </TitleLead>
      <QuickTools>
        <button type="button" aria-label="Properties"><CheckSheet w={17} /></button>
        <button type="button" aria-label="New folder"><SmallFolder /></button>
        <button type="button" aria-label="Customise toolbar"><QuickMenuIcon /></button>
      </QuickTools>
      <TitleRule />
      <Title>{title}</Title>
      <CaptionButton type="button" aria-label="Minimise"><MinimiseIcon /></CaptionButton>
      <CaptionButton type="button" aria-label="Maximise"><MaximiseIcon /></CaptionButton>
      <CaptionButton type="button" aria-label="Close"><CloseIcon /></CaptionButton>
    </TitleBar>
    <TabBar>
      <Tab type="button" $kind="file">File</Tab>
      <Tab type="button" $kind="active">Home</Tab>
      <Tab type="button">Share</Tab>
      <Tab type="button">View</Tab>
      <TabTools>
        <button type="button" aria-label="Collapse ribbon"><Chevron dir="up" size={18} color="#c8c8c8" weight={1.6} /></button>
        <HelpBadge type="button">?</HelpBadge>
      </TabTools>
    </TabBar>
    <Ribbon />
    <AddressRow>
      <ArrowButton type="button" aria-label="Back" $w={32}>{arrow('#fff', 0)}</ArrowButton>
      <ArrowButton type="button" aria-label="Forward" $w={58}>{arrow('#8a8a8a', 180)}</ArrowButton>
      <ArrowButton type="button" aria-label="Recent" $w={14}><Chevron dir="down" color="#fff" /></ArrowButton>
      <ArrowButton type="button" aria-label="Up" $w={42}>{arrow('#fff', 90)}</ArrowButton>
      <AddressBox>
        <SmallFolder />
        <More type="button" $front={front}>«</More>
        <Crumb type="button" $w={46}>{crumbs[0]}</Crumb>
        <Between><Chevron dir="right" size={14} weight={2.4} /></Between>
        <Crumb type="button" $w={80}>{crumbs[1]}</Crumb>
        <Spring />
        <AddressEnd type="button" aria-label="Previous locations" $w={44}><Chevron dir="down" weight={2.4} /></AddressEnd>
        <AddressEnd type="button" aria-label="Refresh" $w={47} $rule>
          <svg width={18} height={18} viewBox="0 0 18 18">
            <path d="M12.500 3.500A6.800 6.800 0 1 1 5 3.500" fill="none" stroke="#8a8a8a" strokeWidth="2.200" />
            <path d="M2 1.800H7V7" fill="none" stroke="#8a8a8a" strokeWidth="2.200" />
          </svg>
        </AddressEnd>
      </AddressBox>
      <SearchBox>
        <svg width={18} height={19} viewBox="0 0 18 19">
          <circle cx={11.500} cy={6.500} r={5.800} fill="none" stroke="#6c6c6c" strokeWidth="1.300" />
          <path d="M7.500 11L.5 18" stroke="#6c6c6c" strokeWidth="1.300" />
        </svg>
        <SearchInput type="search" placeholder={`Search ${title}`} aria-label={`Search ${title}`} />
      </SearchBox>
    </AddressRow>
    <Body>
      <NavPane>
        {navGroups.map((group, g) => (
          <NavGroup key={g}>
            {group.map((item) => (
              <NavItem key={item.label}>
                <NavRow type="button" $child={item.child} $active={item.label === active}>
                  {navIcons[item.icon]}
                  {item.label}
                </NavRow>
              </NavItem>
            ))}
          </NavGroup>
        ))}
      </NavPane>
      <VScroll>
        <ScrollEnd type="button" aria-label="Scroll up"><Chevron dir="up" size={12} weight={2.4} /></ScrollEnd>
        <VTrack><VThumb /></VTrack>
        <ScrollEnd type="button" aria-label="Scroll down"><Chevron dir="down" size={12} weight={2.4} /></ScrollEnd>
      </VScroll>
      <ListPane>
        <FileTable>
          <colgroup>
            <CheckCol />
            <NameCol />
            <DateCol />
            <col />
          </colgroup>
          <thead>
            <tr>
              <th><Tick label="Select all files" /></th>
              <th>
                Name
                <SortMark><Chevron dir="up" size={12} color="#9a9a9a" weight={1.4} /></SortMark>
              </th>
              <th>Date modified</th>
              <th>Type</th>
            </tr>
          </thead>
          <tbody>
            {files.map((f) => (
              <FileRow key={f.name} $fill={f.selected ? (front ? '#777' : '#333') : undefined}>
                <td>{f.selected && <Tick label={`Select ${f.name}`} checked inset={6} />}</td>
                <td><NameCell><IconSlot>{fileIcon(f.kind)}</IconSlot>{f.name}</NameCell></td>
                <td>{f.date}</td>
                <td>{f.type}</td>
              </FileRow>
            ))}
          </tbody>
        </FileTable>
        <HScroll>
          <ScrollEnd type="button" aria-label="Scroll left"><Chevron dir="left" size={12} weight={2.4} /></ScrollEnd>
          <HThumb />
          <Spring />
          <ScrollEnd type="button" aria-label="Scroll right"><Chevron dir="right" size={12} weight={2.4} /></ScrollEnd>
        </HScroll>
      </ListPane>
    </Body>
    <StatusBar>
      <StatusText>{files.length} items</StatusText>
      <StatusRule />
      <StatusText>1 item selected  4.45 KB</StatusText>
      <StatusRule />
      <ViewButtons>
        <ViewButton type="button" aria-label="Details view" $on>
          <svg width={22} height={21} viewBox="0 0 22 21">
            {[0, 5, 10, 15].map((y, i) => (
              <React.Fragment key={y}>
                <rect x={0.500} y={y + 0.500} width={5} height={4.500} fill="#fff" stroke="#aaa" />
                <rect x={2} y={y + 2} width={2} height={2} fill={['#3a72b8', '#3c8a4c', '#a0522d', '#3a72b8'][i]} />
                <path d={`M8 ${y + 2.500}H14M16 ${y + 2.500}H22`} stroke="#7c7c7c" />
              </React.Fragment>
            ))}
          </svg>
        </ViewButton>
        <ViewButton type="button" aria-label="Thumbnail view">{navIcons.picture}</ViewButton>
      </ViewButtons>
    </StatusBar>
  </Frame>
);

/* ---------- annotation ---------- */

const ArrowMark = styled.svg`
  position: absolute;
  left: 1310px;
  top: 500px;
  pointer-events: none;
`;
const Note = styled.strong`
  position: absolute;
  left: 1453px;
  top: 670px;
  color: #ed1c24;
  font-family: 'Open Sans', 'Noto Sans', sans-serif;
  font-size: 42px;
  font-weight: 400;
  line-height: 58px;
`;

export default function App() {
  return (
    <Desktop>
      <GlobalStyle />
      <Explorer title="Application" crumbs={['ma...', 'Applic...']} files={appFiles} active="Quick access" />
      <Explorer title="markharrisonweb" crumbs={['rep...', 'markh...']} files={repoFiles} active="OneDrive" front />
      <ArrowMark width={400} height={640} viewBox="0 0 400 640">
        <path
          d="M13 10L374 621M369 587L375 622L346 604"
          fill="none"
          stroke="#ed1c24"
          strokeWidth="5"
          strokeLinecap="round"
          strokeLinejoin="round"
        />
      </ArrowMark>
      <Note>COPY</Note>
    </Desktop>
  );
}
